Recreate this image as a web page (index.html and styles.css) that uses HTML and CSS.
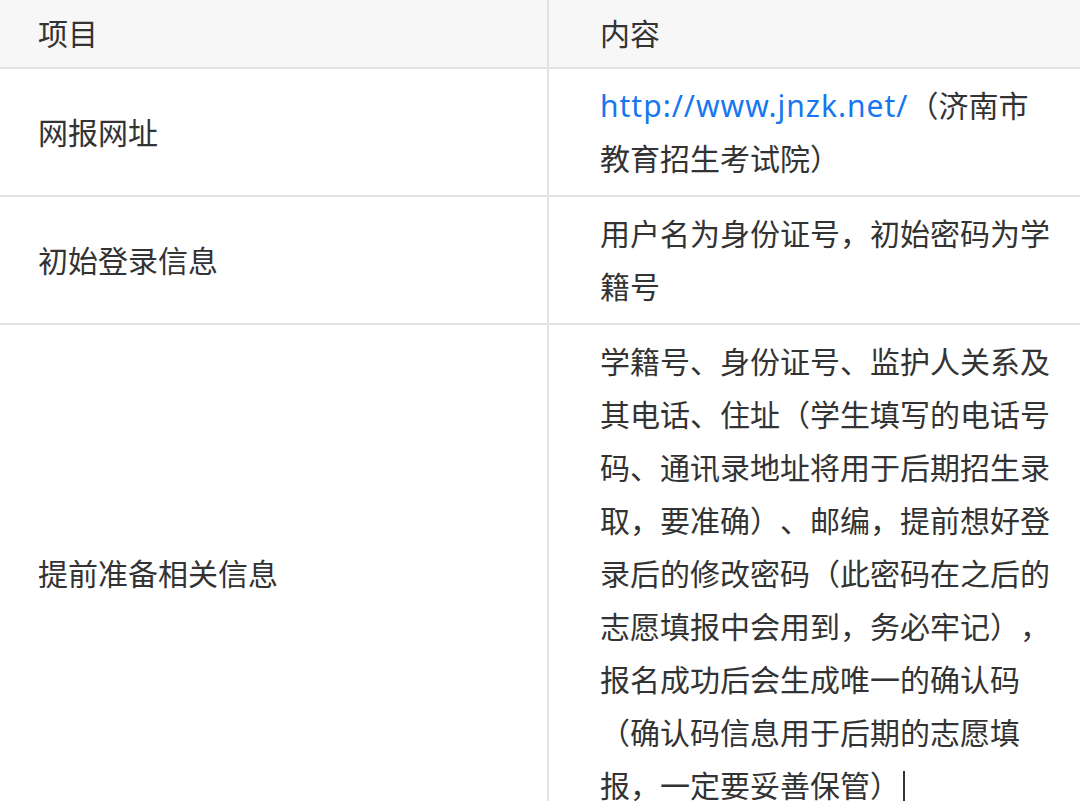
FILE: index.html
```html
<!DOCTYPE html>
<html lang="zh-CN">
<head>
<meta charset="utf-8">
<link rel="stylesheet" href="styles.css">
</head>
<body>
<table class="info">
  <thead>
    <tr>
      <th class="col-item">项目</th>
      <th class="col-content">内容</th>
    </tr>
  </thead>
  <tbody>
    <tr>
      <td class="col-item">网报网址</td>
      <td class="col-content"><a class="link" href="#">http://www.jnzk.net/</a>（济南市教育招生考试院）</td>
    </tr>
    <tr>
      <td class="col-item">初始登录信息</td>
      <td class="col-content">用户名为身份证号，初始密码为学籍号</td>
    </tr>
    <tr>
      <td class="col-item">提前准备相关信息</td>
      <td class="col-content">学籍号、身份证号、监护人关系及其电话、住址（学生填写的电话号码、通讯录地址将用于后期招生录取，要准确）、邮编，提前想好登录后的修改密码（此密码在之后的志愿填报中会用到，务必牢记），报名成功后会生成唯一的确认码（确认码信息用于后期的志愿填报，一定要妥善保管）<span class="caret"></span></td>
    </tr>
  </tbody>
</table>
</body>
</html>
```

FILE: styles.css
```css
html, body {
  margin: 0;
  padding: 0;
  background: #ffffff;
  overflow: hidden;
  width: 1080px;
  height: 801px;
}

body {
  font-family: "Noto Sans", "Noto Sans CJK SC", sans-serif;
  font-size: 30px;
  line-height: 53px;
  color: #333333;
  text-spacing-trim: space-all;
}

.info {
  border-collapse: separate;
  border-spacing: 0;
  width: 1080px;
  table-layout: fixed;
}

.info th,
.info td {
  font-weight: normal;
  text-align: left;
  vertical-align: middle;
  border-bottom: 2px solid #e3e3e3;
  box-sizing: border-box;
  word-break: break-all;
}

.info thead th {
  background: #f7f7f7;
  padding-top: 7px;
  padding-bottom: 7px;
}

.info tbody td {
  padding-top: 10px;
  padding-bottom: 10px;
}

.col-item {
  width: 549px;
  padding-left: 38px;
  padding-right: 10px;
  border-right: 2px solid #e3e3e3;
}

.col-content {
  width: 531px;
  padding-left: 51px;
  padding-right: 24px;
}

.link {
  color: #1677f0;
  text-decoration: none;
  letter-spacing: 1px;
}

.caret {
  display: inline-block;
  width: 2px;
  height: 34px;
  background: #333333;
  margin-left: 3px;
  vertical-align: -8px;
}
```
